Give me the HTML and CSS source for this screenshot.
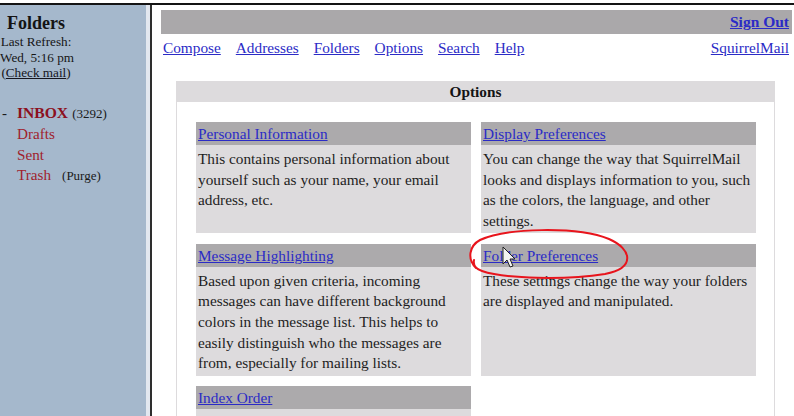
FILE: index.html
```html
<!DOCTYPE html>
<html>
<head>
<meta charset="utf-8">
<title>SquirrelMail Options</title>
<link rel="stylesheet" href="styles.css">
</head>
<body>
<div class="topline"></div>
<div class="screen">
  <aside class="left">
    <div class="fhead">
      <div class="ftitle">Folders</div>
      <div class="fmeta">Last Refresh:</div>
      <div class="fmeta">Wed, 5:16 pm</div>
      <div class="fmeta">(<a class="check" href="#">Check mail</a>)</div>
    </div>
    <ul class="flist">
      <li><span class="dash">-</span><a class="inbox" href="#">INBOX</a><span class="cnt">(3292)</span></li>
      <li><a class="fold" href="#">Drafts</a></li>
      <li><a class="fold" href="#">Sent</a></li>
      <li><a class="fold" href="#">Trash</a><span class="purge">(Purge)</span></li>
    </ul>
  </aside>
  <div class="sep"></div>
  <main class="main">
    <div class="bar"><a class="signout" href="#">Sign Out</a></div>
    <nav class="nav">
      <div class="links">
        <a href="#">Compose</a>
        <a href="#">Addresses</a>
        <a href="#">Folders</a>
        <a href="#">Options</a>
        <a href="#">Search</a>
        <a href="#">Help</a>
      </div>
      <a href="#">SquirrelMail</a>
    </nav>
    <section class="opts">
      <div class="opts-h">Options</div>
      <div class="grid">
        <div class="card">
          <div class="card-h"><a href="#">Personal Information</a></div>
          <div class="card-b">This contains personal information about yourself such as your name, your email address, etc.</div>
        </div>
        <div class="card">
          <div class="card-h"><a href="#">Display Preferences</a></div>
          <div class="card-b">You can change the way that SquirrelMail looks and displays information to you, such as the colors, the language, and other settings.</div>
        </div>
        <div class="card">
          <div class="card-h"><a href="#">Message Highlighting</a></div>
          <div class="card-b">Based upon given criteria, incoming messages can have different background colors in the message list. This helps to easily distinguish who the messages are from, especially for mailing lists.</div>
        </div>
        <div class="card">
          <div class="card-h"><a href="#">Folder Preferences</a></div>
          <div class="card-b">These settings change the way your folders are displayed and manipulated.</div>
        </div>
        <div class="card">
          <div class="card-h"><a href="#">Index Order</a></div>
          <div class="card-b card-empty"></div>
        </div>
      </div>
    </section>
  </main>
</div>
<svg class="annot" width="794" height="416" viewBox="0 0 794 416">
  <path d="M 476 268 C 467 259, 469 246, 480 240 C 505 228, 577 226, 609 239 C 632 249, 636 268, 605 274 C 566 280, 505 279, 482 271 C 476 269, 473 265, 474 260" fill="none" stroke="#e8141c" stroke-width="2" stroke-linecap="round"/>
  <path d="M 503 247 L 503 264 L 507 260 L 510 267 L 513 266 L 510 259 L 515 259 Z" fill="#f2f2f2" stroke="#222" stroke-width="1" stroke-linejoin="round"/>
</svg>
</body>
</html>
```
FILE: styles.css
```css
html, body {
  margin: 0;
  padding: 0;
}
body {
  width: 794px;
  height: 416px;
  overflow: hidden;
  position: relative;
  background: #ffffff;
  font-family: "Liberation Serif", "Times New Roman", serif;
  color: #1e1e1e;
}
a {
  color: #2b2bc6;
  text-decoration: underline;
}
.topline {
  margin-top: 3px;
  height: 2px;
  background: #141414;
}
.screen {
  display: flex;
  height: 411px;
}
.left {
  width: 146px;
  flex: none;
  background: #a5b8cc;
  padding-top: 7px;
  box-sizing: border-box;
}
.fhead {
  width: 72px;
  text-align: center;
  white-space: nowrap;
}
.ftitle {
  font-weight: bold;
  font-size: 18px;
  line-height: 22px;
  color: #141414;
}
.fmeta {
  font-size: 13.2px;
  line-height: 15.5px;
  color: #151515;
}
.fmeta:first-of-type {
  margin-top: 2px;
}
.check {
  color: #15151e;
}
.flist {
  list-style: none;
  margin: 22.5px 0 0 0;
  padding: 0;
}
.flist li {
  display: flex;
  align-items: baseline;
  height: 20.8px;
  line-height: 20.8px;
  padding-left: 17px;
  position: relative;
  white-space: nowrap;
}
.dash {
  position: absolute;
  left: 2px;
  font-size: 15px;
  color: #1a1a1a;
}
.inbox {
  font-weight: bold;
  font-size: 15.6px;
  color: #8c1020;
  text-decoration: none;
}
.cnt {
  font-size: 13px;
  margin-left: 4px;
  color: #1a1a1a;
}
.fold {
  font-size: 15.2px;
  color: #a01e2c;
  text-decoration: none;
}
.purge {
  font-size: 13px;
  margin-left: 11px;
  color: #1a1a1a;
}
.sep {
  width: 2px;
  flex: none;
  border-left: 4px solid #e2e7ef;
  background: #2e2e2e;
}
.main {
  flex: 1;
  padding: 5px 2px 0 9px;
  font-size: 15.3px;
  min-width: 0;
}
.bar {
  height: 24px;
  line-height: 24px;
  background: #aaa8aa;
  text-align: right;
  padding-right: 3px;
}
.signout {
  font-weight: bold;
  font-size: 15.5px;
}
.nav {
  display: flex;
  justify-content: space-between;
  margin-top: 4px;
  line-height: 20px;
  padding: 0 3px 0 2px;
  white-space: nowrap;
}
.links {
  display: flex;
  gap: 15px;
}
.opts {
  margin: 23px 17px 0 15px;
  border: 1px solid #dddbdd;
}
.opts-h {
  background: #dddbdd;
  height: 20px;
  line-height: 20px;
  text-align: center;
  font-weight: bold;
  color: #141414;
}
.grid {
  display: grid;
  grid-template-columns: 1fr 1fr;
  column-gap: 10px;
  row-gap: 10.5px;
  padding: 20px 18px 0 19px;
}
.card {
  display: flex;
  flex-direction: column;
}
.card-h {
  background: #acaaac;
  height: 23px;
  line-height: 23px;
  padding-left: 2px;
}
.card-b {
  flex: 1;
  background: #dddbdd;
  line-height: 20.6px;
  padding: 4px 4px 2px 2px;
  color: #1e1e1e;
}
.card-empty {
  min-height: 40px;
}
.annot {
  position: absolute;
  left: 0;
  top: 0;
  pointer-events: none;
}
```
